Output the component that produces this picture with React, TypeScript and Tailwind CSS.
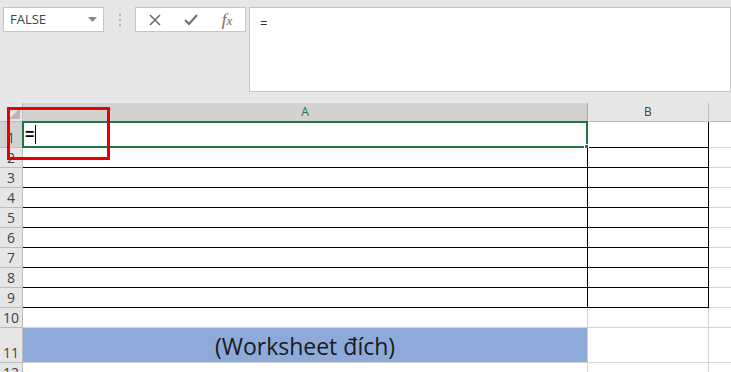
import React from "react";

const rowHeights = [26, 20, 20, 20, 20, 20, 20, 20, 20, 20, 35, 20];

export default function App() {
  return (
    <div className="relative w-[731px] h-[372px] overflow-hidden bg-white" style={{ fontFamily: '"Open Sans", "Noto Sans", sans-serif' }}>
      {/* Top formula bar */}
      <div className="h-[103px] bg-[#e6e6e6] flex items-start pt-[7px] pl-[3px]">
        <div className="w-[101px] h-[25px] bg-white border border-[#c6c6c6] flex items-center justify-between pl-[6px] pr-[6px]">
          <span className="text-[13px] text-[#444]">FALSE</span>
          <svg width="9" height="5" viewBox="0 0 9 5"><path d="M0 0 L9 0 L4.5 5 Z" fill="#8a8a8a" /></svg>
        </div>
        <div className="w-[31px] h-[25px] flex flex-col items-center justify-center gap-[3px]">
          <span className="w-[2px] h-[2px] bg-[#b4b4b4]" />
          <span className="w-[2px] h-[2px] bg-[#b4b4b4]" />
          <span className="w-[2px] h-[2px] bg-[#b4b4b4]" />
        </div>
        <div className="w-[111px] h-[25px] bg-white border border-[#c6c6c6] flex items-center">
          <div className="w-[37px] flex justify-center">
            <svg width="12" height="12" viewBox="0 0 12 12"><path d="M1 1 L11 11 M11 1 L1 11" stroke="#6d6d6d" strokeWidth="1.6" /></svg>
          </div>
          <div className="w-[36px] flex justify-center">
            <svg width="14" height="12" viewBox="0 0 14 12"><path d="M1 6 L5 10 L13 1" stroke="#6d6d6d" strokeWidth="2" fill="none" /></svg>
          </div>
          <div className="w-[36px] flex justify-center">
            <span className="text-[17px] leading-none italic text-[#6d6d6d]" style={{ fontFamily: '"Liberation Serif", serif' }}>f<span className="text-[13px]">x</span></span>
          </div>
        </div>
        <div className="ml-[3px] flex-1 h-[85px] bg-white border border-[#c6c6c6] pl-[10px] pt-[2px]">
          <span className="text-[13px] text-[#333]">=</span>
        </div>
      </div>

      {/* Grid */}
      <div className="grid grid-cols-[23px_565px_121px_1fr]">
        {/* Header row */}
        <div className="h-[19px] bg-[#e6e6e6] border-r border-b border-[#bdbdbd] relative">
          <svg className="absolute right-[2px] bottom-[2px]" width="11" height="11" viewBox="0 0 11 11"><path d="M11 0 L11 11 L0 11 Z" fill="#b7b7b7" /></svg>
        </div>
        <div className="h-[19px] bg-[#d2d2d2] border-r border-b border-[#a9a9a9] flex items-center justify-center text-[12px] text-[#217346]">A</div>
        <div className="h-[19px] bg-[#e6e6e6] border-r border-b border-[#bdbdbd] flex items-center justify-center text-[12px] text-[#444]">B</div>
        <div className="h-[19px] bg-[#e6e6e6] border-b border-[#bdbdbd]" />

        {rowHeights.map((h, i) => {
          const r = i + 1;
          const boxed = r <= 9;
          return (
            <React.Fragment key={r}>
              <div
                className={`border-r border-b border-[#bdbdbd] flex items-end justify-center text-[14px] leading-[18px] text-[#444] ${r === 1 ? "bg-[#d2d2d2]" : "bg-[#e6e6e6]"}`}
                style={{ height: h }}
              >
                {r}
              </div>
              <div
                className={`border-r border-b ${r === 11 ? "bg-[#8eaadb]" : "bg-white"} relative flex items-center justify-center`}
                style={{ height: h, borderBottomColor: boxed ? "#000" : "#d4d4d4", borderRightColor: boxed ? "#000" : "#d4d4d4" }}
              >
                {r === 1 && (
                  <div className="absolute -left-[1px] -top-[1px] -right-[1px] -bottom-[1px] border-2 border-[#217346] flex items-center pl-[1px]">
                    <span className="text-[16px] font-bold leading-none text-black" style={{ fontFamily: '"Liberation Sans", sans-serif' }}>=</span>
                    <span className="ml-[1px] w-[1px] h-[19px] bg-black" />
                    <span className="absolute -right-[3px] -bottom-[3px] w-[5px] h-[5px] bg-[#217346] border border-white" />
                  </div>
                )}
                {r === 11 && (
                  <span className="text-[23px] leading-none text-[#1a1a1a] pt-[3px]" style={{ fontFamily: '"Open Sans", sans-serif' }}>(Worksheet đích)</span>
                )}
              </div>
              <div
                className="border-r border-b bg-white"
                style={{ height: h, borderRightColor: boxed ? "#000" : "#d4d4d4", borderBottomColor: boxed ? "#000" : "#d4d4d4" }}
              />
              <div className="border-b border-[#d4d4d4] bg-white" style={{ height: h }} />
            </React.Fragment>
          );
        })}
      </div>

      {/* Red highlight overlay */}
      <div className="absolute left-[7px] top-[107px] w-[103px] h-[53px] border-[3px] border-[#e60000]" />
    </div>
  );
}
